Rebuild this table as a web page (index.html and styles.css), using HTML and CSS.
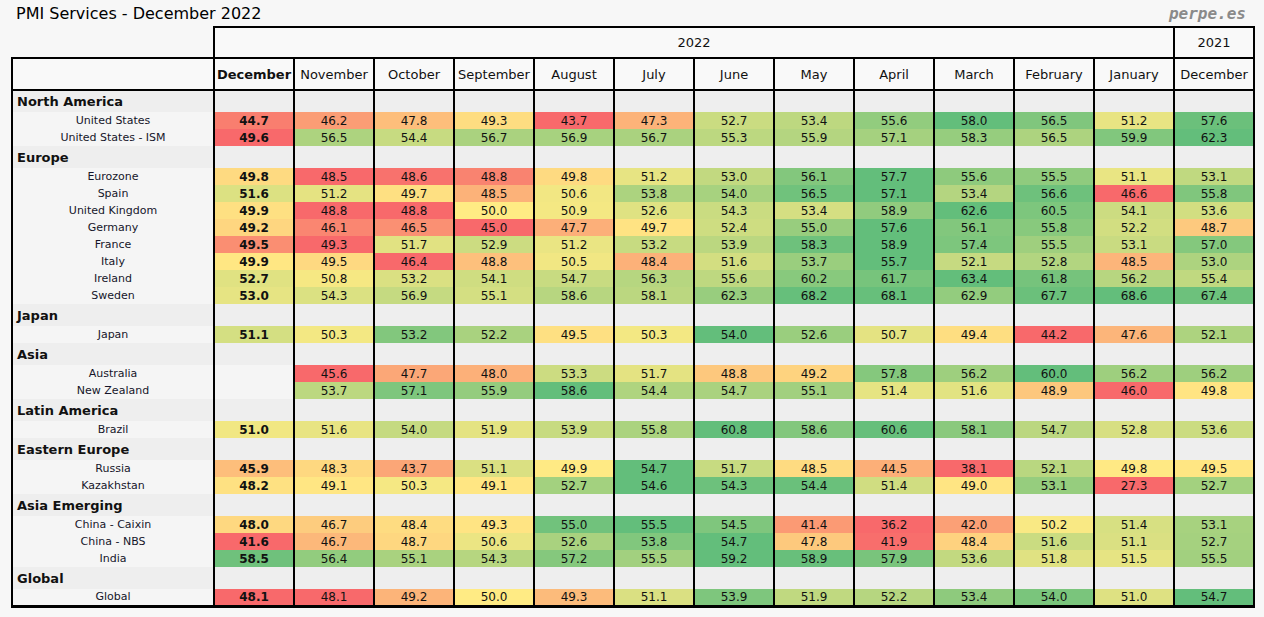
FILE: index.html
```html
<!DOCTYPE html>
<html lang="en">
<head>
<meta charset="utf-8">
<title>PMI Services - December 2022</title>
<link rel="stylesheet" href="styles.css">
</head>
<body>
<header class="top">
  <h1 class="title">PMI Services - December 2022</h1>
  <span class="brand">perpe.es</span>
</header>
<div class="wrap">
  <table class="pmi">
    <colgroup>
      <col class="c-label">
      <col class="c-m"><col class="c-m"><col class="c-m"><col class="c-m"><col class="c-m"><col class="c-m">
      <col class="c-m"><col class="c-m"><col class="c-m"><col class="c-m"><col class="c-m"><col class="c-m"><col class="c-m">
    </colgroup>
    <thead>
      <tr class="year">
        <th class="blank"></th>
        <th colspan="12">2022</th>
        <th>2021</th>
      </tr>
      <tr class="month">
        <th class="label-h"></th>
        <th class="cur">December</th>
        <th>November</th>
        <th>October</th>
        <th>September</th>
        <th>August</th>
        <th>July</th>
        <th>June</th>
        <th>May</th>
        <th>April</th>
        <th>March</th>
        <th>February</th>
        <th>January</th>
        <th>December</th>
      </tr>
    </thead>
    <tbody id="body"></tbody>
  </table>
</div>
<script src="script.js"></script>
</body>
</html>
```
FILE: styles.css
```css
* { box-sizing: border-box; }
body {
  margin: 0;
  background: #f7f7f7;
  font-family: "DejaVu Sans", "Noto Sans", sans-serif;
  color: #111;
}
.top {
  display: flex;
  justify-content: space-between;
  align-items: center;
  height: 26px;
  padding: 0 18px 0 16px;
}
.title {
  margin: 0;
  font-size: 16px;
  font-weight: normal;
  color: #000;
}
.brand {
  font-family: "DejaVu Sans Mono", monospace;
  font-weight: bold;
  font-style: italic;
  font-size: 16px;
  color: #8a8a8a;
}
.wrap {
  padding-left: 11px;
}
.pmi {
  border-collapse: collapse;
  table-layout: fixed;
  width: 1242px;
}
.c-label { width: 202px; }
.c-m { width: 80px; }
.pmi th, .pmi td {
  padding: 0;
  border-left: 2px solid #000;
  border-right: 2px solid #000;
  text-align: center;
  white-space: nowrap;
  overflow: hidden;
}
.pmi thead th {
  font-weight: normal;
  background: #f9f9f9;
  font-size: 13px;
  border-top: 2px solid #000;
  border-bottom: 2px solid #000;
}
.pmi thead .year th { height: 31px; }
.pmi thead .month th { height: 32px; }
.pmi thead th.blank {
  border: none;
  background: transparent;
}
.pmi thead th.cur { font-weight: bold; }
.pmi td { font-size: 12px; }
.sec td { height: 22px; background: #eeeeee; }
.sec td.name {
  text-align: left;
  padding-left: 4px;
  font-weight: bold;
  font-size: 13px;
}
.row td { height: 17px; }
.row td.name {
  background: #f5f5f5;
  font-size: 11px;
  color: #15152a;
}
.row td.empty { background: #f5f5f5; }
.row td.cur { font-weight: bold; }
.pmi tbody tr:last-child td { border-bottom: 3px solid #000; }
```
FILE: script.js
```js
var data = [
  ["North America"],
  ["United States", [44.7,46.2,47.8,49.3,43.7,47.3,52.7,53.4,55.6,58.0,56.5,51.2,57.6]],
  ["United States - ISM", [49.6,56.5,54.4,56.7,56.9,56.7,55.3,55.9,57.1,58.3,56.5,59.9,62.3]],
  ["Europe"],
  ["Eurozone", [49.8,48.5,48.6,48.8,49.8,51.2,53.0,56.1,57.7,55.6,55.5,51.1,53.1]],
  ["Spain", [51.6,51.2,49.7,48.5,50.6,53.8,54.0,56.5,57.1,53.4,56.6,46.6,55.8]],
  ["United Kingdom", [49.9,48.8,48.8,50.0,50.9,52.6,54.3,53.4,58.9,62.6,60.5,54.1,53.6]],
  ["Germany", [49.2,46.1,46.5,45.0,47.7,49.7,52.4,55.0,57.6,56.1,55.8,52.2,48.7]],
  ["France", [49.5,49.3,51.7,52.9,51.2,53.2,53.9,58.3,58.9,57.4,55.5,53.1,57.0]],
  ["Italy", [49.9,49.5,46.4,48.8,50.5,48.4,51.6,53.7,55.7,52.1,52.8,48.5,53.0]],
  ["Ireland", [52.7,50.8,53.2,54.1,54.7,56.3,55.6,60.2,61.7,63.4,61.8,56.2,55.4]],
  ["Sweden", [53.0,54.3,56.9,55.1,58.6,58.1,62.3,68.2,68.1,62.9,67.7,68.6,67.4]],
  ["Japan"],
  ["Japan", [51.1,50.3,53.2,52.2,49.5,50.3,54.0,52.6,50.7,49.4,44.2,47.6,52.1]],
  ["Asia"],
  ["Australia", [null,45.6,47.7,48.0,53.3,51.7,48.8,49.2,57.8,56.2,60.0,56.2,56.2]],
  ["New Zealand", [null,53.7,57.1,55.9,58.6,54.4,54.7,55.1,51.4,51.6,48.9,46.0,49.8]],
  ["Latin America"],
  ["Brazil", [51.0,51.6,54.0,51.9,53.9,55.8,60.8,58.6,60.6,58.1,54.7,52.8,53.6]],
  ["Eastern Europe"],
  ["Russia", [45.9,48.3,43.7,51.1,49.9,54.7,51.7,48.5,44.5,38.1,52.1,49.8,49.5]],
  ["Kazakhstan", [48.2,49.1,50.3,49.1,52.7,54.6,54.3,54.4,51.4,49.0,53.1,27.3,52.7]],
  ["Asia Emerging"],
  ["China - Caixin", [48.0,46.7,48.4,49.3,55.0,55.5,54.5,41.4,36.2,42.0,50.2,51.4,53.1]],
  ["China - NBS", [41.6,46.7,48.7,50.6,52.6,53.8,54.7,47.8,41.9,48.4,51.6,51.1,52.7]],
  ["India", [58.5,56.4,55.1,54.3,57.2,55.5,59.2,58.9,57.9,53.6,51.8,51.5,55.5]],
  ["Global"],
  ["Global", [48.1,48.1,49.2,50.0,49.3,51.1,53.9,51.9,52.2,53.4,54.0,51.0,54.7]]
];

/* Three-colour scale per row: row minimum = red, 50 = yellow, row maximum = green */
var RED = [248,105,107], YEL = [255,235,132], GRN = [99,190,123];
var MID = 50;

function mix(a, b, t) {
  t = Math.max(0, Math.min(1, t));
  return "rgb(" + a.map(function (v, i) { return Math.round(v + (b[i] - v) * t); }).join(",") + ")";
}

function colour(v, mn, mx) {
  if (v <= MID) return mix(RED, YEL, mn >= MID ? 1 : (v - mn) / (MID - mn));
  return mix(YEL, GRN, mx <= MID ? 0 : (v - MID) / (mx - MID));
}

var tbody = document.getElementById("body");
data.forEach(function (row) {
  var tr = document.createElement("tr");
  var name = document.createElement("td");
  name.className = "name";
  name.textContent = row[0];
  tr.appendChild(name);
  if (!row[1]) {
    tr.className = "sec";
    for (var i = 0; i < 13; i++) tr.appendChild(document.createElement("td"));
  } else {
    tr.className = "row";
    var vals = row[1].filter(function (v) { return v !== null; });
    var mn = Math.min.apply(null, vals), mx = Math.max.apply(null, vals);
    row[1].forEach(function (v, i) {
      var td = document.createElement("td");
      if (i === 0) td.classList.add("cur");
      if (v === null) {
        td.classList.add("empty");
      } else {
        td.textContent = v.toFixed(1);
        td.style.background = colour(v, mn, mx);
      }
      tr.appendChild(td);
    });
  }
  tbody.appendChild(tr);
});
```
